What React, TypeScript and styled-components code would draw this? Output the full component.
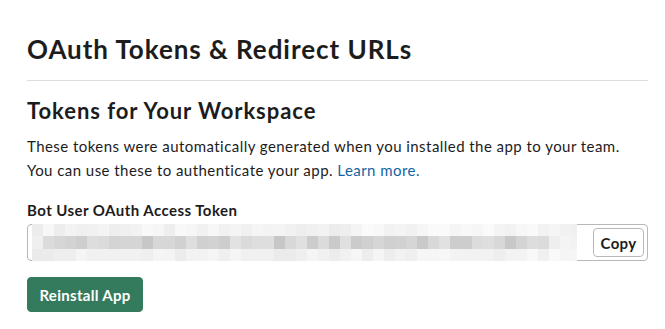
import React from 'react';
import styled, { createGlobalStyle } from 'styled-components';

const GlobalStyle = createGlobalStyle`
  body {
    margin: 0;
    background: #ffffff;
    font-family: Lato, "Liberation Sans", sans-serif;
    color: #1d1c1d;
  }
`;

const Page = styled.main`
  width: 621px;
  padding: 33px 0 0 27px;
`;

const Title = styled.h1`
  margin: 0;
  font-size: 26px;
  line-height: 32px;
  font-weight: 700;
  letter-spacing: 0.95px;
  padding-bottom: 15px;
  border-bottom: 1px solid #dddddd;
`;

const Section = styled.section`
  display: flex;
  flex-direction: column;
  align-items: flex-start;
  padding-top: 16px;
`;

const Heading = styled.h2`
  margin: 0 0 9px;
  font-size: 22px;
  line-height: 28px;
  font-weight: 700;
  letter-spacing: 0.95px;
`;

const Text = styled.p`
  margin: 0 0 16px;
  font-size: 15px;
  line-height: 24px;
  letter-spacing: 0.45px;
`;

const Link = styled.a`
  color: #1264a3;
  text-decoration: none;
`;

const Label = styled.label`
  font-size: 15px;
  line-height: 24px;
  font-weight: 700;
  letter-spacing: 0.45px;
  margin-bottom: 2px;
`;

const TokenField = styled.div`
  position: relative;
  box-sizing: border-box;
  width: 100%;
  height: 37px;
  display: flex;
  align-items: center;
  justify-content: flex-end;
  padding-right: 3px;
  border: 1px solid #b8b8b8;
  border-radius: 4px;
  background: #ffffff;
  margin-bottom: 16px;
`;

const Redacted = styled.svg`
  position: absolute;
  left: 4px;
  top: -1px;
`;

const Button = styled.button<{ $primary?: boolean }>`
  box-sizing: border-box;
  font-family: inherit;
  font-weight: 700;
  cursor: pointer;
  border-radius: 4px;
  letter-spacing: 0.3px;
  border: 1px solid ${p => (p.$primary ? '#347a5c' : '#b9b9b9')};
  background: ${p => (p.$primary ? '#347a5c' : '#ffffff')};
  color: ${p => (p.$primary ? '#ffffff' : '#1d1c1d')};
  font-size: 15px;
  height: ${p => (p.$primary ? '35px' : '29px')};
  width: ${p => (p.$primary ? '116px' : '51px')};
  padding: 0;
`;

// pixelated, redacted token preview
const rows = [
  { y: 0, h: 12, base: 236, spread: 12 },
  { y: 12, h: 13, base: 198, spread: 28 },
  { y: 25, h: 12, base: 234, spread: 12 },
];

function shade(i: number, r: number) {
  const v = Math.sin(i * 12.9898 + r * 78.233) * 43758.5453;
  return v - Math.floor(v);
}

const RedactedToken: React.FC = () => {
  const cols = 50;
  return (
    <Redacted width={545} height={37} viewBox="0 0 545 37">
      {rows.map((row, r) =>
        Array.from({ length: cols }, (_, i) => {
          let g = Math.round(row.base + shade(i, r) * row.spread);
          if (r === 1 && (i < 1 || i > 46)) g = 238 + Math.round(shade(i, 7) * 10);
          if (r !== 1 && i > 28) g = Math.min(250, g + 3);
          g = Math.min(250, g);
          return (
            <rect
              key={`${r}-${i}`}
              x={i * 11}
              y={row.y}
              width={11}
              height={row.h}
              fill={`rgb(${g},${g},${g})`}
            />
          );
        })
      )}
    </Redacted>
  );
};

const App: React.FC = () => {
  return (
    <>
      <GlobalStyle />
      <Page>
        <Title>OAuth Tokens &amp; Redirect URLs</Title>
        <Section>
          <Heading>Tokens for Your Workspace</Heading>
          <Text>
            These tokens were automatically generated when you installed the app to your team.
            <br />
            You can use these to authenticate your app. <Link href="#">Learn more.</Link>
          </Text>
          <Label>Bot User OAuth Access Token</Label>
          <TokenField>
            <RedactedToken />
            <Button>Copy</Button>
          </TokenField>
          <Button $primary>Reinstall App</Button>
        </Section>
      </Page>
    </>
  );
};

export default App;
